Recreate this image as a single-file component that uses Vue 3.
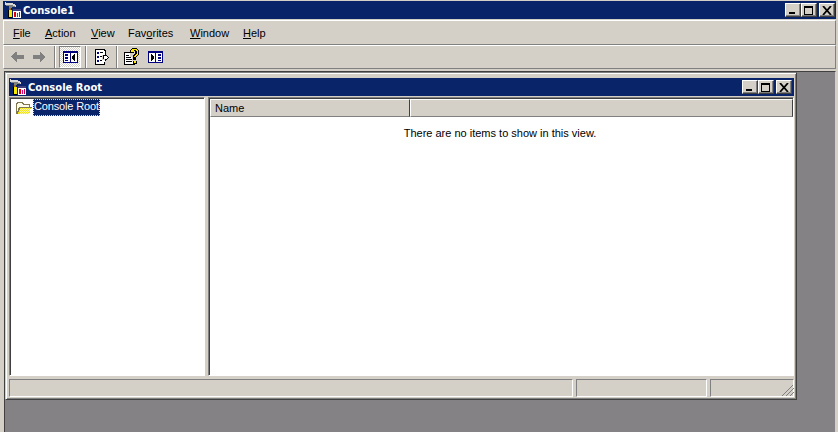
<script setup>
const menus = [
  { pre: '', key: 'F', post: 'ile', cls: 'm-file' },
  { pre: '', key: 'A', post: 'ction', cls: 'm-action' },
  { pre: '', key: 'V', post: 'iew', cls: 'm-view' },
  { pre: 'Fav', key: 'o', post: 'rites', cls: 'm-fav' },
  { pre: '', key: 'W', post: 'indow', cls: 'm-window' },
  { pre: '', key: 'H', post: 'elp', cls: 'm-help' }
]
</script>

<template>
  <div class="app">
    <header class="title main-title">
      <svg class="appicon" width="16" height="16" viewBox="0 0 16 16" shape-rendering="crispEdges">
        <path d="M0 0h1v1h7v1h2v1h1v2h-1V4H7v2H4V4H2V3H0z" fill="#d8d8d8"/>
        <path d="M1 3h7v1h2v1H7v1H4V4H1z" fill="#808080"/>
        <path d="M4 6h2v2H4z" fill="#a06a18"/>
        <path d="M3 8h1v8H3zM4 15h3v1H4z" fill="#000"/>
        <path d="M4 8h3v7H4z" fill="#f8e800"/>
        <path d="M8 7h8v9H8z" fill="#fff"/>
        <path d="M8 7h8v2H8z" fill="#404080"/>
        <path d="M9 10h2v5H9z" fill="#e00000"/>
        <path d="M12 11h1v4h-1z" fill="#d000a0"/>
        <path d="M14 10h1v5h-1z" fill="#c00040"/>
      </svg>
      <span class="title-text">Console1</span>
      <div class="caps">
        <button class="cap"><i class="min"></i></button>
        <button class="cap"><i class="max"></i></button>
        <button class="cap close"><svg width="10" height="9" viewBox="0 0 10 9"><path d="M1 0l8 9M9 0L1 9" stroke="#000" stroke-width="1.8"/></svg></button>
      </div>
    </header>

    <nav class="menubar">
      <span v-for="m in menus" :key="m.key" class="menu" :class="m.cls">{{ m.pre }}<u>{{ m.key }}</u>{{ m.post }}</span>
    </nav>

    <div class="toolbar">
      <svg class="tb arrow-back" width="14" height="12" viewBox="0 0 14 12" shape-rendering="crispEdges"><path d="M6 1h1v3h7v4H7v3H6V10H5V9H4V8H3V7H2V6H1V5h1V4h1V3h1V2h1V1z" fill="#808080"/></svg>
      <svg class="tb arrow-fwd" width="14" height="12" viewBox="0 0 14 12" shape-rendering="crispEdges"><path d="M7 1h1v1h1v1h1v1h1v1h1v1h1v0h-1v1h-1v1h-1v1H9v1H8v1H7V8H0V4h7z" fill="#808080"/></svg>
      <i class="sep s1"></i>
      <span class="pressed">
        <svg width="15" height="12" viewBox="0 0 15 12" shape-rendering="crispEdges">
          <path d="M0 0h15v12H0z" fill="#000080"/>
          <path d="M1 2h13v9H1z" fill="#fff"/>
          <path d="M7 2h1v9H7z" fill="#000080"/>
          <path d="M2 3h3v2H2zM2 6h3v2H2zM2 9h3v1H2z" fill="#000080"/>
          <path d="M12 3v7h-1V9h-1V8H9V5h1V4h1V3z" fill="#000"/>
        </svg>
      </span>
      <i class="sep s2"></i>
      <svg class="tb export" width="14" height="16" viewBox="0 0 14 16" shape-rendering="crispEdges">
        <path d="M0 0h10v1h1v5h-1V2H9V1H1v14h8v-2h1v3H0z" fill="#000"/>
        <path d="M1 1h8v1h1v4H7v5h3v2H9v2H1z" fill="#fff"/>
        <path d="M2 3h2v2H2zM2 7h2v2H2zM2 11h2v2H2z" fill="#000080"/>
        <path d="M5 3h3v1H5zM5 7h2v1H5zM5 11h2v1H5z" fill="#000"/>
        <path d="M8 6h2V5h1v1h1v1h1v1h1v1h-1v1h-1v1h-1v1h-1v-2H8z" fill="#000"/>
        <path d="M9 7h2v-1h0v1h1v1h1v1h-1v1h-1v1h0v-1H9z" fill="#fff"/>
      </svg>
      <i class="sep s3"></i>
      <svg class="tb help" width="16" height="17" viewBox="0 0 16 17" shape-rendering="crispEdges">
        <path d="M0 4h6v1H1v11h9v-3h1v4H0z" fill="#000"/>
        <path d="M1 5h5v4h2v4h2v3H1z" fill="#fff"/>
        <path d="M2 7h3v1H2zM2 9h5v1H2zM2 11h6v1H2zM2 13h6v1H2z" fill="#000"/>
        <path d="M6 2h1V1h1V0h5v1h1v1h1v5h-1v1h-1v1h-1v3H9V7h1V6h1V3h-1v2H6z" fill="#000"/>
        <path d="M8 1h5v1h1v5h-1v1h-1v1h-2V8h1V7h1V6h1V3h-1V2h-2v2H7V2h1z" fill="#ffe800"/>
        <path d="M9 13h4v3H9z" fill="#000"/>
        <path d="M10 13h2v2h-2z" fill="#ffe800"/>
      </svg>
      <svg class="tb pane2" width="15" height="12" viewBox="0 0 15 12" shape-rendering="crispEdges">
        <path d="M0 0h15v12H0z" fill="#000080"/>
        <path d="M1 2h13v9H1z" fill="#fff"/>
        <path d="M7 2h1v9H7z" fill="#000080"/>
        <path d="M10 3h3v2h-3zM10 6h3v2h-3zM10 9h3v1h-3z" fill="#000080"/>
        <path d="M3 3h1v1h1v1h1v3H5v1H4v1H3z" fill="#000"/>
      </svg>
    </div>

    <main class="mdi">
      <section class="child">
        <header class="title child-title">
          <svg class="appicon" width="16" height="16" viewBox="0 0 16 16" shape-rendering="crispEdges">
            <path d="M0 0h1v1h7v1h2v1h1v2h-1V4H7v2H4V4H2V3H0z" fill="#d8d8d8"/>
            <path d="M1 3h7v1h2v1H7v1H4V4H1z" fill="#808080"/>
            <path d="M4 6h2v2H4z" fill="#a06a18"/>
            <path d="M3 8h1v8H3zM4 15h3v1H4z" fill="#000"/>
            <path d="M4 8h3v7H4z" fill="#f8e800"/>
            <path d="M8 7h8v9H8z" fill="#fff"/>
            <path d="M8 7h8v2H8z" fill="#404080"/>
            <path d="M9 10h2v5H9z" fill="#e00000"/>
            <path d="M12 11h1v4h-1z" fill="#d000a0"/>
            <path d="M14 10h1v5h-1z" fill="#c00040"/>
          </svg>
          <span class="title-text">Console Root</span>
          <div class="caps">
            <button class="cap"><i class="min"></i></button>
            <button class="cap"><i class="max"></i></button>
            <button class="cap close"><svg width="10" height="9" viewBox="0 0 10 9"><path d="M1 0l8 9M9 0L1 9" stroke="#000" stroke-width="1.8"/></svg></button>
          </div>
        </header>

        <div class="panes">
          <div class="pane tree">
            <div class="node">
              <svg class="folder" width="17" height="14" viewBox="0 0 17 14" shape-rendering="crispEdges">
                <path d="M2 1h6v1h1v1h6v3h2v1h-1v1h-1v4h-1v1H1V2h1z" fill="#807850"/>
                <path d="M3 2h4v1h1v1h6v2H4v1H3v3H2V3h1z" fill="#fffde8"/>
                <path d="M5 7h11v1h-1v4h-1v1H3v-2h1V9h1z" fill="#f2e21c"/>
                <path d="M6 7h1v1H6zM8 7h1v1H8zM10 7h1v1h-1zM12 7h1v1h-1zM14 7h1v1h-1zM5 8h1v1H5zM7 8h1v1H7zM9 8h1v1H9zM11 8h1v1h-1zM13 8h1v1h-1zM6 9h1v1H6zM8 9h1v1H8zM10 9h1v1h-1zM12 9h1v1h-1zM14 9h1v1h-1zM5 10h1v1H5zM7 10h1v1H7zM9 10h1v1H9zM11 10h1v1h-1zM13 10h1v1h-1zM6 11h1v1H6zM8 11h1v1H8zM10 11h1v1h-1zM12 11h1v1h-1zM5 12h1v1H5zM7 12h1v1H7zM9 12h1v1H9zM11 12h1v1h-1zM13 12h1v1h-1z" fill="#fff8a0"/>
              </svg>
              <span class="node-label">Console Root</span>
            </div>
          </div>
          <div class="pane list">
            <div class="head">
              <span class="col col-name">Name</span>
              <span class="col col-rest"></span>
            </div>
            <p class="empty">There are no items to show in this view.</p>
          </div>
        </div>

        <footer class="status">
          <span class="cell c1"></span>
          <span class="cell c2"></span>
          <span class="cell c3">
            <svg class="grip" width="13" height="13" viewBox="0 0 13 13" shape-rendering="crispEdges">
              <path d="M12 1v1h-1v1h-1v1H9v1H8v1H7v1H6v1H5v1H4v1H3v1H2v1H1v-1h1v-1h1V9h1V8h1V7h1V6h1V5h1V4h1V3h1V2h1V1z" fill="#808080"/>
              <path d="M13 4v1h-1v1h-1v1h-1v1H9v1H8v1H7v1H6v1H5v-1h1v-1h1V9h1V8h1V7h1V6h1V5h1V4z" fill="#808080"/>
              <path d="M13 8v1h-1v1h-1v1h-1v1H9v-1h1v-1h1V9h1V8z" fill="#808080"/>
            </svg>
          </span>
        </footer>
      </section>
    </main>
  </div>
</template>

<style>
html, body { margin: 0; padding: 0; background: #d4d0c8; }
</style>

<style scoped>
.app {
  width: 838px;
  height: 432px;
  overflow: hidden;
  display: flex;
  flex-direction: column;
  box-sizing: border-box;
  padding: 1px 2px 0 3px;
  background: #d4d0c8;
  font-family: "Liberation Sans", Arial, sans-serif;
  font-size: 11px;
  color: #000;
}
.title {
  display: flex;
  align-items: center;
  background: #0a246a;
  color: #fff;
  font-family: "DejaVu Sans", sans-serif;
  font-weight: 700;
  font-size: 10px;
  box-sizing: border-box;
}
.main-title { height: 18px; padding: 0 1px 0 2px; flex: none; }
.child-title { height: 18px; padding: 0 2px 0 1px; flex: none; }
.appicon { flex: none; margin-right: 2px; }
.title-text { flex: 1; white-space: nowrap; }
.caps { display: flex; flex: none; }
.cap {
  width: 16px;
  height: 14px;
  padding: 0;
  background: #d4d0c8;
  border: 1px solid;
  border-color: #fff #404040 #404040 #fff;
  box-shadow: inset -1px -1px 0 #808080;
  display: flex;
  align-items: center;
  justify-content: center;
  position: relative;
  box-sizing: border-box;
}
.close { margin-left: 2px; }
.min { position: absolute; left: 3px; bottom: 2px; width: 6px; height: 2px; background: #000; }
.max { display: block; width: 9px; height: 9px; box-sizing: border-box; border: 1px solid #000; border-top-width: 2px; margin-right: 1px; }

.menubar {
  flex: none;
  height: 25px;
  box-sizing: border-box;
  margin-top: 1px;
  display: flex;
  align-items: center;
  border-top: 1px solid #fff;
  border-bottom: 1px solid #808080;
  border-left: 1px solid #fff;
  border-right: 1px solid #808080;
  padding-left: 9px;
}
.menu { white-space: nowrap; }
.m-file { width: 32px; }
.m-action { width: 46px; }
.m-view { width: 37px; }
.m-fav { width: 62px; }
.m-window { width: 53px; }

.toolbar {
  flex: none;
  height: 24px;
  box-sizing: border-box;
  display: flex;
  align-items: center;
  border-top: 1px solid #fff;
  border-bottom: 1px solid #808080;
  border-left: 1px solid #fff;
  border-right: 1px solid #808080;
  padding-left: 6px;
}
.tb { flex: none; display: block; }
.arrow-fwd { margin-left: 9px; }
.sep {
  display: block;
  flex: none;
  width: 1px;
  height: 22px;
  border-right: 1px solid #fff;
  background: #808080;
}
.s1 { margin: 0 3px 0 7px; }
.pressed {
  flex: none;
  box-sizing: border-box;
  width: 22px;
  height: 22px;
  display: flex;
  align-items: center;
  justify-content: center;
  border: 1px solid;
  border-color: #808080 #fff #fff #808080;
  background-color: #fff;
  background-image:
    linear-gradient(45deg, #d4d0c8 25%, transparent 25%, transparent 75%, #d4d0c8 75%),
    linear-gradient(45deg, #d4d0c8 25%, transparent 25%, transparent 75%, #d4d0c8 75%);
  background-size: 2px 2px;
  background-position: 0 0, 1px 1px;
}
.s2 { margin: 0 8px 0 4px; }
.s3 { margin: 0 6px 0 7px; }
.help { margin-bottom: 2px; }
.pane2 { margin-left: 8px; }

.mdi {
  flex: 1;
  min-height: 0;
  margin-top: 2px;
  margin-left: 1px;
  background: #848284;
  border-top: 1px solid #404040;
  border-left: 1px solid #404040;
  border-right: 1px solid #d4d0c8;
  padding: 0 38px 32px 0;
}
.child {
  height: 100%;
  box-sizing: border-box;
  background: #d4d0c8;
  display: flex;
  flex-direction: column;
  padding: 5px 2px 2px 3px;
  border: 1px solid;
  border-color: #808080 #404040 #404040 #d4d0c8;
  box-shadow: inset 1px 1px 0 #fff, inset -1px -1px 0 #808080;
}
.panes {
  flex: 1;
  min-height: 0;
  display: flex;
  gap: 3px;
  margin-top: 1px;
}
.pane {
  box-sizing: border-box;
  background: #fff;
  border: 1px solid;
  border-color: #808080 #fff #fff #808080;
  box-shadow: inset 1px 1px 0 #404040, 1px 1px 0 #d4d0c8;
  padding: 1px 0 0 1px;
}
.tree { width: 196px; flex: none; }
.list { flex: 1; min-width: 0; }
.node { display: flex; align-items: center; height: 17px; padding-left: 4px; }
.folder { flex: none; margin-right: 1px; }
.node-label {
  box-sizing: border-box;
  height: 17px;
  line-height: 15px;
  width: 67px;
  padding-left: 1px;
  background: #0a246a;
  color: #fff;
  letter-spacing: -0.15px;
  outline: 1px dotted #ffe060;
  outline-offset: -1px;
  white-space: nowrap;
}
.head { display: flex; height: 18px; }
.col {
  box-sizing: border-box;
  background: #d4d0c8;
  border: 1px solid;
  border-color: #fff #404040 #808080 #fff;
  line-height: 17px;
  padding-left: 4px;
}
.col-name { width: 200px; flex: none; }
.col-rest { flex: 1; }
.empty {
  margin: 9px 0 0;
  padding-right: 3px;
  text-align: center;
  line-height: 14px;
}
.status {
  flex: none;
  display: flex;
  gap: 3px;
  height: 18px;
  margin-top: 3px;
}
.cell {
  box-sizing: border-box;
  border: 1px solid;
  border-color: #808080 #fff #fff #808080;
  position: relative;
}
.c1 { flex: 1; }
.c2 { width: 131px; flex: none; }
.c3 { width: 84px; flex: none; }
.grip { position: absolute; right: -1px; bottom: -1px; }
</style>
